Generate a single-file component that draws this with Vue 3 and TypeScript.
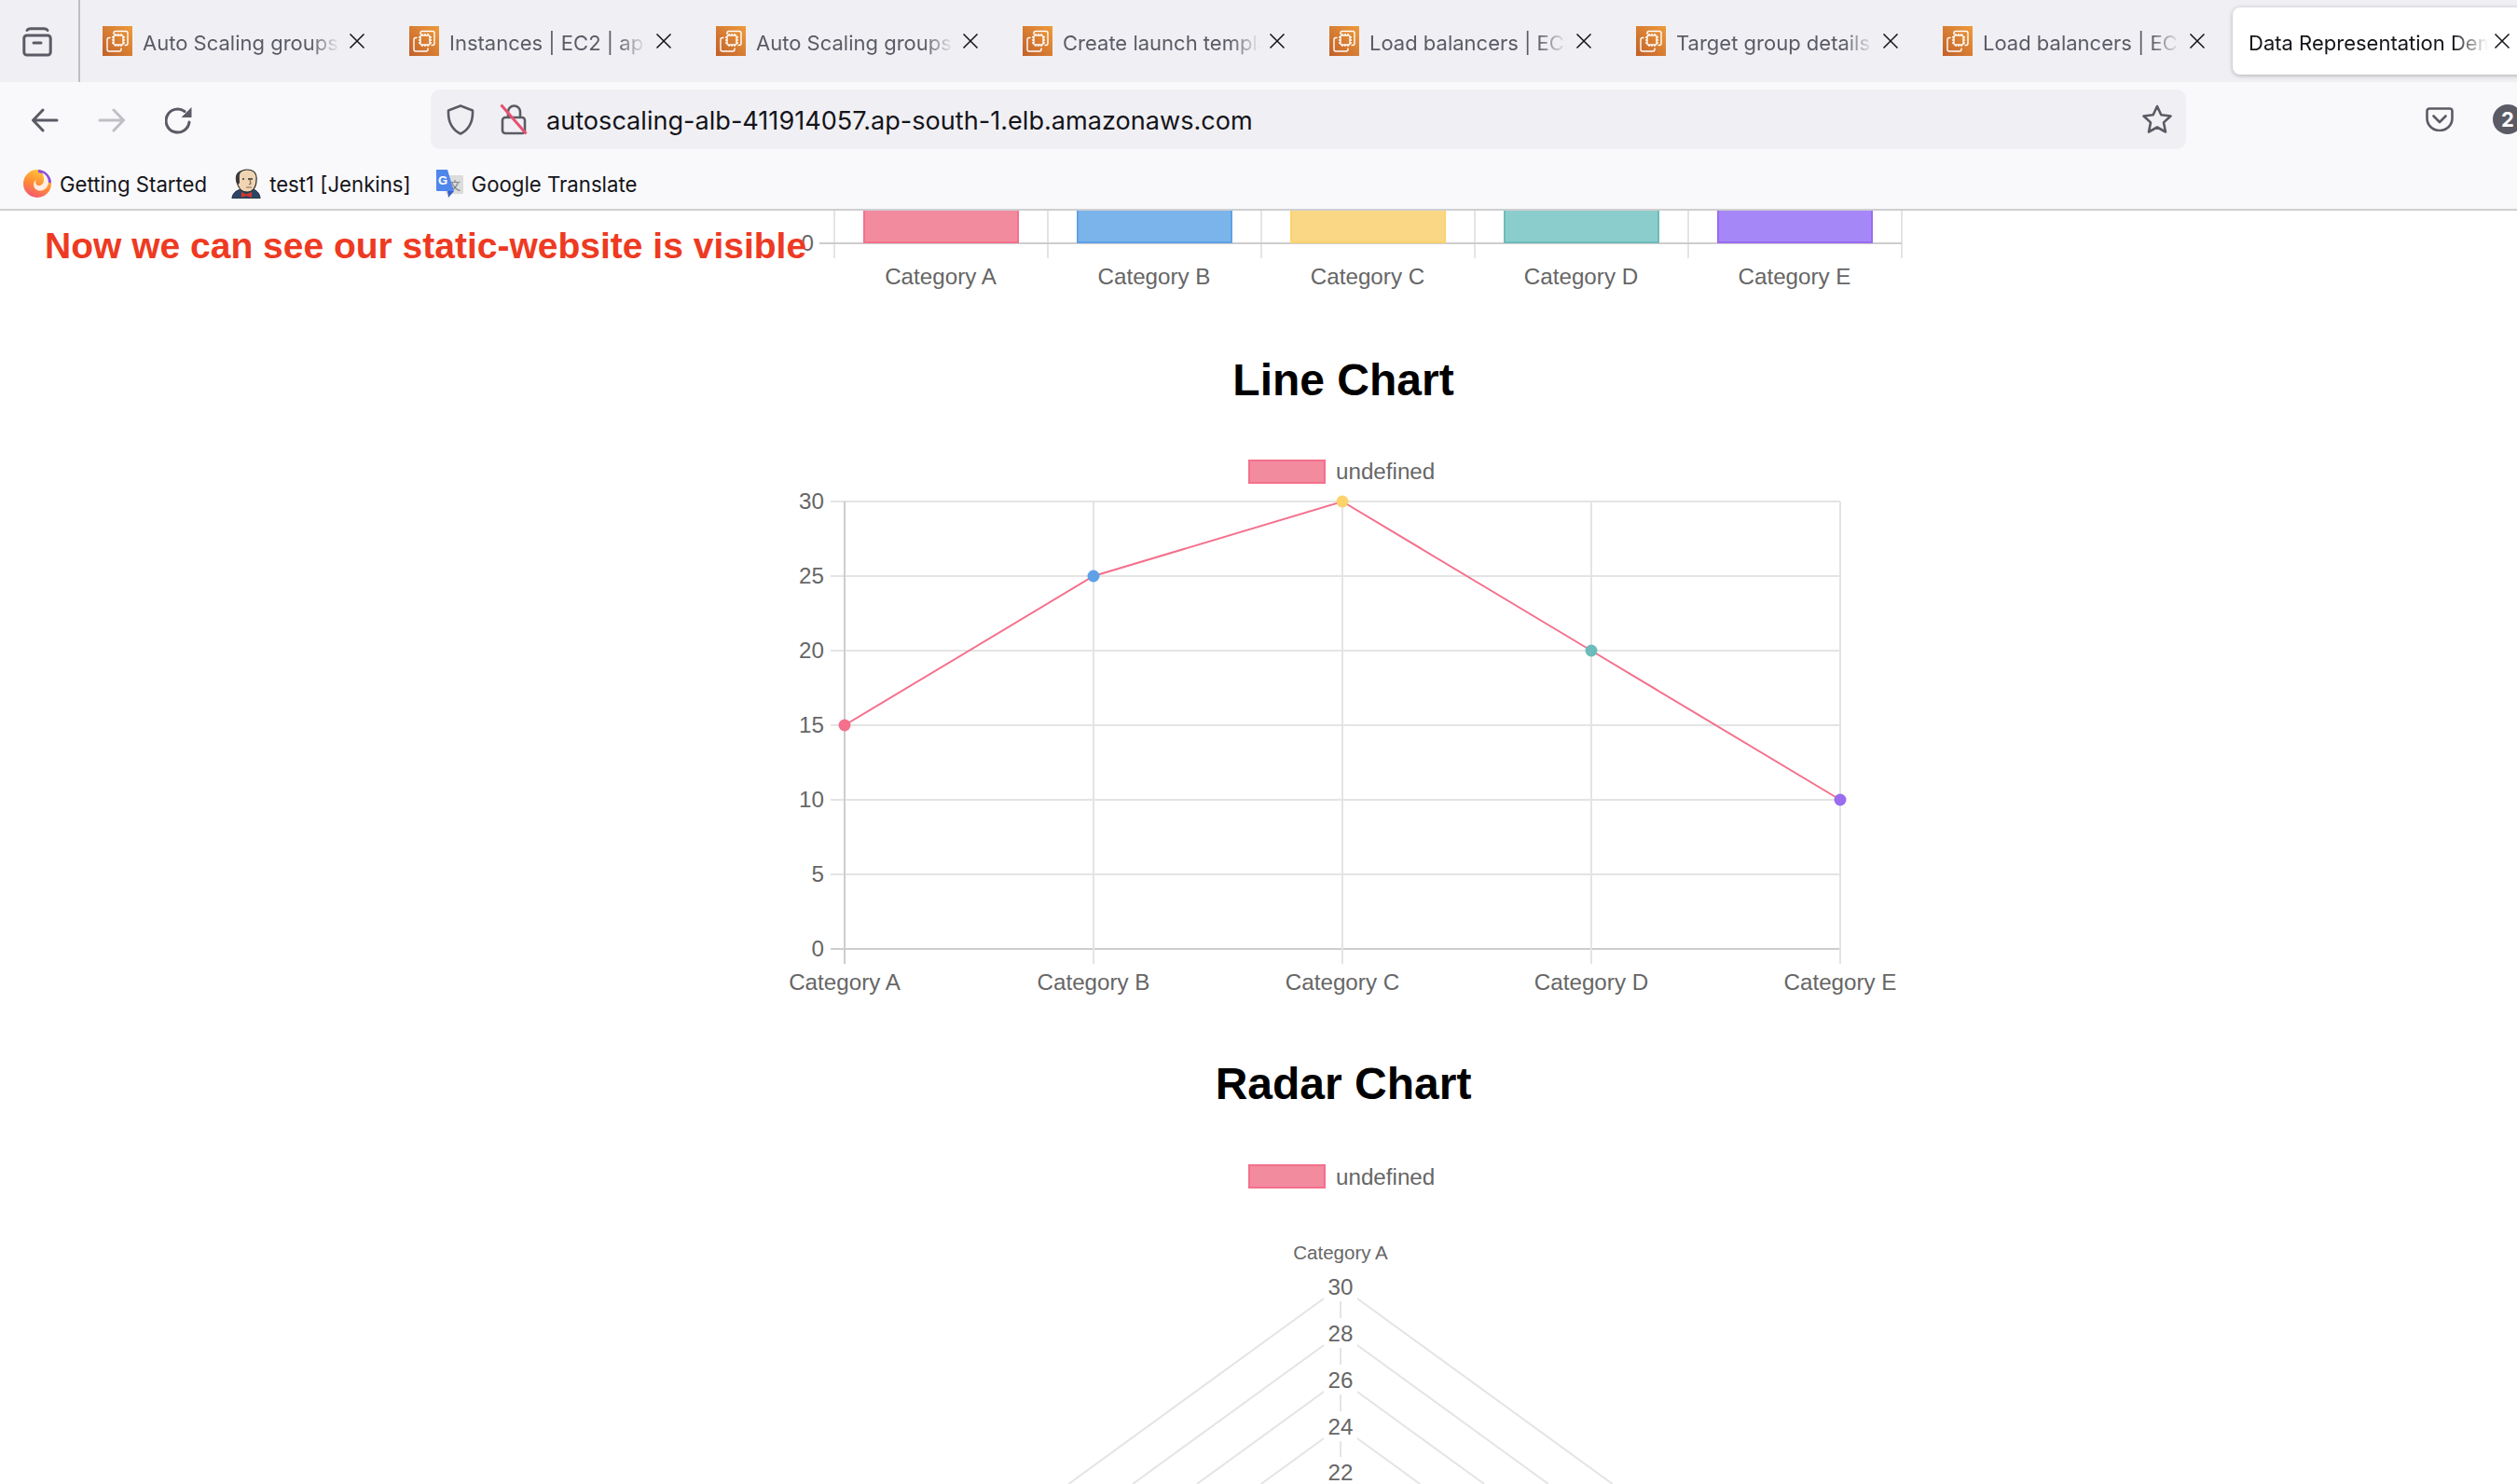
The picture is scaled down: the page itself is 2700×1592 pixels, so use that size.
<script setup lang="ts">
const tabs = [
  'Auto Scaling groups | EC2',
  'Instances | EC2 | ap-south-1',
  'Auto Scaling groups | EC2',
  'Create launch template',
  'Load balancers | EC2 | ap-south',
  'Target group details | EC2',
  'Load balancers | EC2 | ap-south',
]
const cats = ['Category A', 'Category B', 'Category C', 'Category D', 'Category E']
const fills = ['#f38b9f', '#7ab4ea', '#fad785', '#8bcdcc', '#a687f7']
const strokes = ['#f4708c', '#5ea1e8', '#fbd26c', '#6cbcbb', '#9a6cf0']

const barTicks = [895, 1124, 1353, 1582, 1811, 2040]
const bars = fills.map((fill, i) => ({ x: 927 + 229 * i, fill, stroke: strokes[i], label: cats[i] }))

const lineX = [906, 1173, 1440, 1707, 1974]
const values = [15, 25, 30, 20, 10]
const yFor = (v: number) => 538 + (30 - v) * 16
const yTicks = [30, 25, 20, 15, 10, 5, 0]
const linePoints = values.map((v, i) => `${lineX[i]},${yFor(v)}`).join(' ')

const radarTicks = [
  { v: 30, y: 1380 },
  { v: 28, y: 1430 },
  { v: 26, y: 1480 },
  { v: 24, y: 1530 },
  { v: 22, y: 1579 },
]
const radarEdge = (y: number) => {
  const dx = (1592 - y) / 0.7265
  return { left: `M1438 ${y}L${1438 - dx} 1592`, right: `M1438 ${y}L${1438 + dx} 1592` }
}
</script>

<template>
  <div class="page">
    <header class="tabstrip">
      <div class="tabs-button">
        <svg width="32" height="32" viewBox="0 0 32 32" fill="none" stroke="#5b5b66" stroke-width="3" stroke-linecap="round" stroke-linejoin="round">
          <path d="M5 3.500C6 2 7 1.800 9 1.800H23C25 1.800 26 2 27 3.500" />
          <rect x="1.800" y="9" width="28.400" height="21" rx="3" />
          <path d="M12 17H20" />
        </svg>
      </div>
      <div v-for="(t, i) in tabs" :key="i" class="tab">
        <svg class="favicon" width="32" height="32" viewBox="0 0 32 32">
          <defs>
            <linearGradient :id="'aws' + i" x1="0" y1="1" x2="1" y2="0">
              <stop offset="0" stop-color="#c1602a" />
              <stop offset="1" stop-color="#ee9b3c" />
            </linearGradient>
          </defs>
          <rect width="32" height="32" :fill="'url(#aws' + i + ')'" />
          <g fill="none" stroke="#fff" stroke-width="1.400">
            <path d="M12 9V7.500A2 2 0 0 1 14 5.500H25A2 2 0 0 1 27 7.500V18.500A2 2 0 0 1 25 20.500H23.500" />
            <path d="M8.500 12.500H7A2 2 0 0 0 5 14.500V25A2 2 0 0 0 7 27H18A2 2 0 0 0 20 25V23.500" />
            <rect x="12" y="10" width="10" height="10" rx="1" />
            <path d="M14 8V10M17 8V10M20 8V10M14 20V22M17 20V22M20 20V22M10 12H12M10 15H12M10 18H12M22 12H24M22 15H24M22 18H24" />
          </g>
        </svg>
        <span class="tab-title">{{ t }}</span>
        <svg class="close" width="18" height="16" viewBox="0 0 18 16" fill="none" stroke="#15141a" stroke-width="1.500">
          <path d="M1.500 .5L16.500 15.500M16.500 .5L1.500 15.500" />
        </svg>
      </div>
      <div class="tab active">
        <span class="tab-title">Data Representation Demo</span>
        <svg class="close" width="18" height="16" viewBox="0 0 18 16" fill="none" stroke="#15141a" stroke-width="1.500">
          <path d="M1.500 .5L16.500 15.500M16.500 .5L1.500 15.500" />
        </svg>
      </div>
    </header>

    <nav class="toolbar">
      <div class="nav-buttons">
        <svg width="30" height="26" viewBox="0 0 30 26" fill="none" stroke="#5b5b66" stroke-width="3" stroke-linecap="round" stroke-linejoin="round">
          <path d="M28 13H3M13 2L2.500 13L13 24" />
        </svg>
        <svg width="30" height="26" viewBox="0 0 30 26" fill="none" stroke="#bfbfc5" stroke-width="3" stroke-linecap="round" stroke-linejoin="round">
          <path d="M2 13H27M17 2L27.500 13L17 24" />
        </svg>
        <svg width="30" height="30" viewBox="0 0 30 30" fill="none">
          <path d="M26 17A12.500 12.500 0 1 1 21 5.500" stroke="#5b5b66" stroke-width="3" stroke-linecap="round" />
          <path d="M28.500 1V12H17.500Z" fill="#5b5b66" />
        </svg>
      </div>
      <div class="urlbar">
        <svg width="30" height="33" viewBox="0 0 30 33" fill="none" stroke="#5b5b66" stroke-width="2.600" stroke-linejoin="round">
          <path d="M15 1.500L28 6.500C28.500 18 24 27 15 31.500C6 27 1.500 18 2 6.500Z" />
        </svg>
        <svg class="lock" width="30" height="34" viewBox="0 0 30 34" fill="none">
          <path d="M9 15V9A6.500 6.500 0 0 1 22 9V15" stroke="#5b5b66" stroke-width="2.600" />
          <rect x="3" y="15" width="24" height="17" rx="3" stroke="#5b5b66" stroke-width="2.600" />
          <path d="M1.500 1.500L28.500 32.500" stroke="#e8506f" stroke-width="3" />
        </svg>
        <span class="url">autoscaling-alb-411914057.ap-south-1.elb.amazonaws.com</span>
        <svg class="star" width="34" height="32" viewBox="0 0 34 32" fill="none" stroke="#5b5b66" stroke-width="2.600" stroke-linejoin="round">
          <path d="M17 2L21.300 11.300L31.500 12.500L24 19.400L26 29.500L17 24.500L8 29.500L10 19.400L2.500 12.500L12.700 11.300Z" />
        </svg>
      </div>
      <div class="toolbar-end">
        <svg width="30" height="26" viewBox="0 0 30 26" fill="none" stroke="#5b5b66" stroke-width="2.600" stroke-linecap="round" stroke-linejoin="round">
          <path d="M4 1.500H26A2.500 2.500 0 0 1 28.500 4V12A13.500 13 0 0 1 1.500 12V4A2.500 2.500 0 0 1 4 1.500Z" />
          <path d="M8.500 9.500L15 16L21.500 9.500" />
        </svg>
        <span class="badge">2</span>
      </div>
    </nav>

    <div class="bookmarks">
      <div class="bookmark first">
        <svg width="30" height="30" viewBox="0 0 30 30">
          <defs>
            <linearGradient id="fx" x1=".7" y1="0" x2=".3" y2="1">
              <stop offset="0" stop-color="#ffcb3d" />
              <stop offset=".55" stop-color="#ff8a35" />
              <stop offset="1" stop-color="#f2557a" />
            </linearGradient>
          </defs>
          <circle cx="15" cy="15" r="15" fill="url(#fx)" />
          <path d="M16 1.500A13.500 13.500 0 0 1 28.500 14" fill="none" stroke="#8a4fe0" stroke-width="3" />
          <path d="M20 3A12 12 0 0 1 27 14C26 21 20 24 15 22C10 20 10 13 14 11C12 14 14 18 18 17C23 16 23 8 20 3Z" fill="#fff" opacity=".85" />
        </svg>
        <span>Getting Started</span>
      </div>
      <div class="bookmark">
        <svg width="32" height="32" viewBox="0 0 32 32">
          <path d="M1 32C1 27 5 23 11 22L17 25L24 22C28 24 31 27 31 32Z" fill="#2d4564" stroke="#1e2c40" stroke-width="1" />
          <path d="M6 13C5 5 11 1 17 1C24 1 28 5 27 12C27 20 23 25 17 25C11 25 7 20 6 13Z" fill="#efd5b4" stroke="#2b2b2b" stroke-width="1.200" />
          <path d="M6 16C3 8 6 3 11 2C8 6 9 10 9 15C8 17 7 17 6 16Z" fill="#3a3a3a" />
          <path d="M18 11H23M12 11H14" stroke="#333" stroke-width="1.400" fill="none" />
          <path d="M20 12L21 16L19 17M16 20H22" stroke="#8a6a50" stroke-width="1.200" fill="none" />
          <path d="M11 25L16 27.500L22 25L22 31L16 29L11 31Z" fill="#d6352b" />
        </svg>
        <span>test1 [Jenkins]</span>
      </div>
      <div class="bookmark">
        <svg width="30" height="30" viewBox="0 0 30 30">
          <rect x="11" y="6" width="19" height="20" rx="1" fill="#dcdcdc" />
          <text x="15" y="22" class="gt-small">文</text>
          <path d="M1 0H13L20 23H2A1 1 0 0 1 1 22Z" fill="#4f86ec" />
          <path d="M13 23H20L14 30Z" fill="#3a5fc4" />
          <text x="3" y="16" class="gt-g">G</text>
        </svg>
        <span>Google Translate</span>
      </div>
    </div>

    <main class="content">
      <p class="note">Now we can see our static-website is visible</p>

      <svg class="chart bar-chart" viewBox="0 226 2700 114">
        <line v-for="x in barTicks" :key="x" :x1="x" y1="226" :x2="x" y2="277" class="grid" />
        <line x1="879" y1="261" x2="2040" y2="261" class="axis" />
        <text x="873" y="260" text-anchor="end" dominant-baseline="central" class="tick">0</text>
        <g v-for="b in bars" :key="b.label">
          <rect :x="b.x" y="224" width="165" height="36" :fill="b.fill" :stroke="b.stroke" stroke-width="2" />
          <text :x="b.x + 82" y="296.500" text-anchor="middle" dominant-baseline="central" class="tick">{{ b.label }}</text>
        </g>
      </svg>

      <h2 class="heading">Line Chart</h2>

      <svg class="chart line-chart" viewBox="0 470 2700 630">
        <rect x="1340" y="494" width="81" height="24" class="swatch" />
        <text x="1433" y="505" dominant-baseline="central" class="tick">undefined</text>
        <g v-for="v in yTicks" :key="v">
          <line x1="891" :y1="yFor(v)" x2="1974" :y2="yFor(v)" class="grid" />
          <text x="884" :y="yFor(v) - 0.700" text-anchor="end" dominant-baseline="central" class="tick">{{ v }}</text>
        </g>
        <line x1="891" y1="1018" x2="1974" y2="1018" class="axis" />
        <g v-for="(x, i) in lineX" :key="x">
          <line :x1="x" y1="538" :x2="x" y2="1034" :class="i === 0 ? 'axis' : 'grid'" />
          <text :x="x" y="1053" text-anchor="middle" dominant-baseline="central" class="tick">{{ cats[i] }}</text>
        </g>
        <polyline :points="linePoints" fill="none" stroke="#f4708c" stroke-width="2" />
        <circle v-for="(x, i) in lineX" :key="'p' + x" :cx="x" :cy="yFor(values[i])" r="6.500" :fill="strokes[i]" />
      </svg>

      <h2 class="heading radar-heading">Radar Chart</h2>

      <svg class="chart radar-chart" viewBox="0 1225 2700 367">
        <rect x="1340" y="1250" width="81" height="24" class="swatch" />
        <text x="1433" y="1262" dominant-baseline="central" class="tick">undefined</text>
        <text x="1438" y="1343" text-anchor="middle" dominant-baseline="central" class="radar-label">Category A</text>
        <line x1="1438" y1="1380" x2="1438" y2="1592" class="grid" />
        <g v-for="t in radarTicks" :key="t.v">
          <path :d="radarEdge(t.y).left" class="grid" fill="none" />
          <path :d="radarEdge(t.y).right" class="grid" fill="none" />
        </g>
        <g v-for="t in radarTicks" :key="'l' + t.v">
          <rect x="1420" :y="t.y - 16" width="36" height="32" fill="#fff" />
          <text x="1438" :y="t.y" text-anchor="middle" dominant-baseline="central" class="tick">{{ t.v }}</text>
        </g>
      </svg>
    </main>
  </div>
</template>

<style scoped>
.page {
  width: 2700px;
  height: 1592px;
  display: flex;
  flex-direction: column;
  overflow: hidden;
  background: #fff;
  font-family: Inter, "Liberation Sans", sans-serif;
}
.tabstrip {
  height: 88px;
  flex: none;
  display: flex;
  background: #f0f0f4;
  overflow: hidden;
}
.tabs-button {
  width: 86px;
  flex: none;
  box-sizing: border-box;
  border-right: 2px solid #bdbdc3;
  padding: 29px 0 0 24px;
}
.tab {
  width: 329px;
  flex: none;
  box-sizing: border-box;
  display: flex;
  align-items: center;
  padding-left: 24px;
  color: #5b5b66;
  font-size: 22px;
}
.favicon {
  flex: none;
}
.tab-title {
  width: 212px;
  margin: 3px 0 0 11px;
  flex: none;
  white-space: nowrap;
  overflow: hidden;
  -webkit-mask-image: linear-gradient(to right, #000 85%, transparent 100%);
  mask-image: linear-gradient(to right, #000 85%, transparent 100%);
}
.close {
  flex: none;
  margin-left: 9px;
}
.tab.active {
  width: 320px;
  height: 72px;
  margin: 8px 0 0 6px;
  padding-left: 17px;
  border-radius: 8px 0 0 8px;
  background: #fff;
  color: #15141a;
  box-shadow: 0 1px 5px rgba(0, 0, 0, 0.28);
}
.tab.active .tab-title {
  width: 257px;
  margin-left: 0;
}
.tab.active .close {
  margin-left: 6px;
}
.toolbar {
  height: 80px;
  flex: none;
  display: flex;
  align-items: center;
  background: #f9f9fb;
}
.nav-buttons {
  width: 462px;
  flex: none;
  box-sizing: border-box;
  padding: 2px 0 0 33px;
  display: flex;
  align-items: center;
  gap: 42px;
}
.urlbar {
  width: 1883px;
  height: 64px;
  flex: none;
  box-sizing: border-box;
  display: flex;
  align-items: center;
  padding: 0 14px 0 17px;
  background: #f0f0f4;
  border-radius: 10px;
}
.lock {
  margin-left: 27px;
}
.url {
  margin: 2px 0 0 20px;
  font-size: 27.100px;
  color: #15141a;
  white-space: nowrap;
}
.star {
  margin-left: auto;
}
.toolbar-end {
  flex: 1;
  display: flex;
  align-items: center;
  padding-left: 257px;
  gap: 42px;
}
.badge {
  width: 32px;
  height: 32px;
  flex: none;
  border-radius: 50%;
  background: #5b5b66;
  color: #fff;
  font-size: 22px;
  font-weight: 700;
  line-height: 32px;
  text-align: center;
}
.bookmarks {
  height: 56px;
  flex: none;
  box-sizing: border-box;
  display: flex;
  align-items: flex-start;
  background: #f9f9fb;
  padding: 8px 0 0 25px;
  gap: 26px;
}
.bookmark {
  display: flex;
  align-items: center;
  gap: 9px;
  height: 42px;
  font-size: 22.200px;
  color: #15141a;
  white-space: nowrap;
}
.gt-small {
  font-family: "Noto Sans CJK SC", sans-serif;
  font-size: 12px;
  fill: #777;
}
.gt-g {
  font-family: "Liberation Sans", sans-serif;
  font-size: 13px;
  font-weight: 700;
  fill: #fff;
}
.content {
  position: relative;
  flex: 1;
  min-height: 0;
  display: flex;
  flex-direction: column;
  overflow: hidden;
  border-top: 2px solid #cfcfd2;
  font-family: "Liberation Sans", Arial, sans-serif;
}
.note {
  position: absolute;
  left: 48px;
  top: 14px;
  margin: 0;
  z-index: 1;
  font-size: 39px;
  line-height: 48px;
  font-weight: 700;
  color: #ee3a22;
  white-space: nowrap;
}
.chart {
  display: block;
  width: 2700px;
  flex: none;
}
.bar-chart {
  height: 114px;
}
.line-chart {
  height: 630px;
}
.radar-chart {
  height: 367px;
}
.heading {
  height: 130px;
  flex: none;
  box-sizing: border-box;
  margin: 0;
  padding: 6px 0 0 182px;
  text-align: center;
  font-size: 48px;
  line-height: 124px;
  font-weight: 700;
  color: #000;
}
.radar-heading {
  height: 125px;
  padding-top: 0;
  line-height: 125px;
}
.grid {
  stroke: #e4e4e4;
  stroke-width: 2;
}
.axis {
  stroke: #cdcdcd;
  stroke-width: 2;
}
.tick {
  font-size: 24.200px;
  fill: #666;
}
.radar-label {
  font-size: 20.500px;
  fill: #666;
}
.swatch {
  fill: #f38b9f;
  stroke: #f4708c;
  stroke-width: 2;
}
</style>

<style>
html,
body {
  margin: 0;
  background: #fff;
}
</style>
